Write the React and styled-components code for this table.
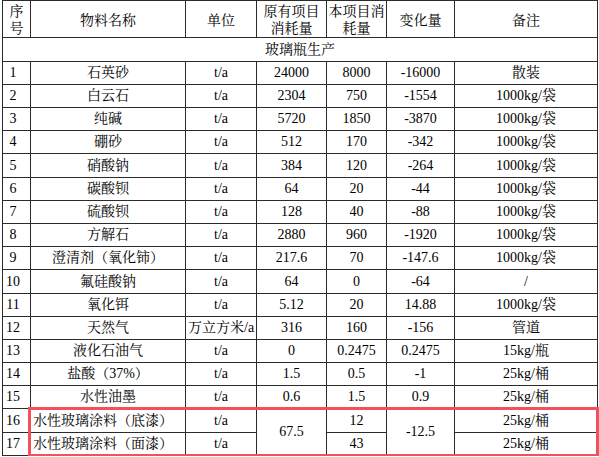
import { createGlobalStyle, styled } from "styled-components";

const GlobalStyle = createGlobalStyle`
  html, body {
    margin: 0;
    padding: 0;
    background: #ffffff;
  }
  body {
    font-family: "Liberation Serif", "Noto Serif CJK SC", "Noto Sans CJK SC", serif;
    color: #000;
  }
`;

const columns = [28, 155, 71, 70, 60, 68, 143];

const rows = [
  { no: "1", name: "石英砂", unit: "t/a", before: "24000", now: "8000", diff: "-16000", note: "散装", h: 23 },
  { no: "2", name: "白云石", unit: "t/a", before: "2304", now: "750", diff: "-1554", note: "1000kg/袋", h: 23 },
  { no: "3", name: "纯碱", unit: "t/a", before: "5720", now: "1850", diff: "-3870", note: "1000kg/袋", h: 23 },
  { no: "4", name: "硼砂", unit: "t/a", before: "512", now: "170", diff: "-342", note: "1000kg/袋", h: 23 },
  { no: "5", name: "硝酸钠", unit: "t/a", before: "384", now: "120", diff: "-264", note: "1000kg/袋", h: 24 },
  { no: "6", name: "碳酸钡", unit: "t/a", before: "64", now: "20", diff: "-44", note: "1000kg/袋", h: 23 },
  { no: "7", name: "硫酸钡", unit: "t/a", before: "128", now: "40", diff: "-88", note: "1000kg/袋", h: 23 },
  { no: "8", name: "方解石", unit: "t/a", before: "2880", now: "960", diff: "-1920", note: "1000kg/袋", h: 23 },
  { no: "9", name: "澄清剂（氧化铈）", unit: "t/a", before: "217.6", now: "70", diff: "-147.6", note: "1000kg/袋", h: 23 },
  { no: "10", name: "氟硅酸钠", unit: "t/a", before: "64", now: "0", diff: "-64", note: "/", h: 24 },
  { no: "11", name: "氧化铒", unit: "t/a", before: "5.12", now: "20", diff: "14.88", note: "1000kg/袋", h: 23 },
  { no: "12", name: "天然气", unit: "万立方米/a", before: "316", now: "160", diff: "-156", note: "管道", h: 23 },
  { no: "13", name: "液化石油气", unit: "t/a", before: "0", now: "0.2475", diff: "0.2475", note: "15kg/瓶", h: 23 },
  { no: "14", name: "盐酸（37%）", unit: "t/a", before: "1.5", now: "0.5", diff: "-1", note: "25kg/桶", h: 23 },
  { no: "15", name: "水性油墨", unit: "t/a", before: "0.6", now: "1.5", diff: "0.9", note: "25kg/桶", h: 23 },
];

const Page = styled.div`
  padding-left: 2px;
`;

const Frame = styled.div`
  position: relative;
  width: 595px;
`;

const Table = styled.table`
  border-collapse: collapse;
  table-layout: fixed;
  width: 595px;
  font-size: 14px;
`;

const Row = styled.tr`
  height: ${(p) => p.$h}px;
`;

const Cell = styled.td`
  border: 1px solid #2b2b2b;
  padding: 0 2px;
  text-align: ${(p) => (p.$align ? p.$align : "center")};
  vertical-align: middle;
  line-height: 16px;
  white-space: nowrap;
  overflow: hidden;
`;

const NoCell = styled(Cell)`
  padding: 0 7px 0 0;
`;

const HeadCell = styled(Cell)`
  padding: 2px 0 0;
  line-height: 17px;
`;

const SectionCell = styled(Cell)`
  padding: 0;
`;

const Highlight = styled.div`
  position: absolute;
  left: 26px;
  top: 407px;
  width: 565px;
  height: 44px;
  border: 3px solid #f0515a;
  pointer-events: none;
`;

const headers = [
  ["序", "号"],
  ["物料名称"],
  ["单位"],
  ["原有项目", "消耗量"],
  ["本项目消", "耗量"],
  ["变化量"],
  ["备注"],
];

export default function App() {
  return (
    <Page>
      <GlobalStyle />
      <Frame>
        <Table>
          <colgroup>
            {columns.map((w, i) => (
              <col key={i} style={{ width: w }} />
            ))}
          </colgroup>
          <tbody>
            <Row $h={37}>
              {headers.map((lines, i) => (
                <HeadCell key={i}>
                  {lines.map((l, j) => (
                    <div key={j}>{l}</div>
                  ))}
                </HeadCell>
              ))}
            </Row>
            <Row $h={24}>
              <SectionCell colSpan={7}>玻璃瓶生产</SectionCell>
            </Row>
            {rows.map((r) => (
              <Row key={r.no} $h={r.h}>
                <NoCell>{r.no}</NoCell>
                <Cell>{r.name}</Cell>
                <Cell>{r.unit}</Cell>
                <Cell>{r.before}</Cell>
                <Cell>{r.now}</Cell>
                <Cell>{r.diff}</Cell>
                <Cell>{r.note}</Cell>
              </Row>
            ))}
            <Row $h={24}>
              <NoCell>16</NoCell>
              <Cell $align="left">水性玻璃涂料（底漆）</Cell>
              <Cell>t/a</Cell>
              <Cell rowSpan={2}>67.5</Cell>
              <Cell>12</Cell>
              <Cell rowSpan={2}>-12.5</Cell>
              <Cell>25kg/桶</Cell>
            </Row>
            <Row $h={23}>
              <NoCell>17</NoCell>
              <Cell $align="left">水性玻璃涂料（面漆）</Cell>
              <Cell>t/a</Cell>
              <Cell>43</Cell>
              <Cell>25kg/桶</Cell>
            </Row>
          </tbody>
        </Table>
        <Highlight />
      </Frame>
    </Page>
  );
}
